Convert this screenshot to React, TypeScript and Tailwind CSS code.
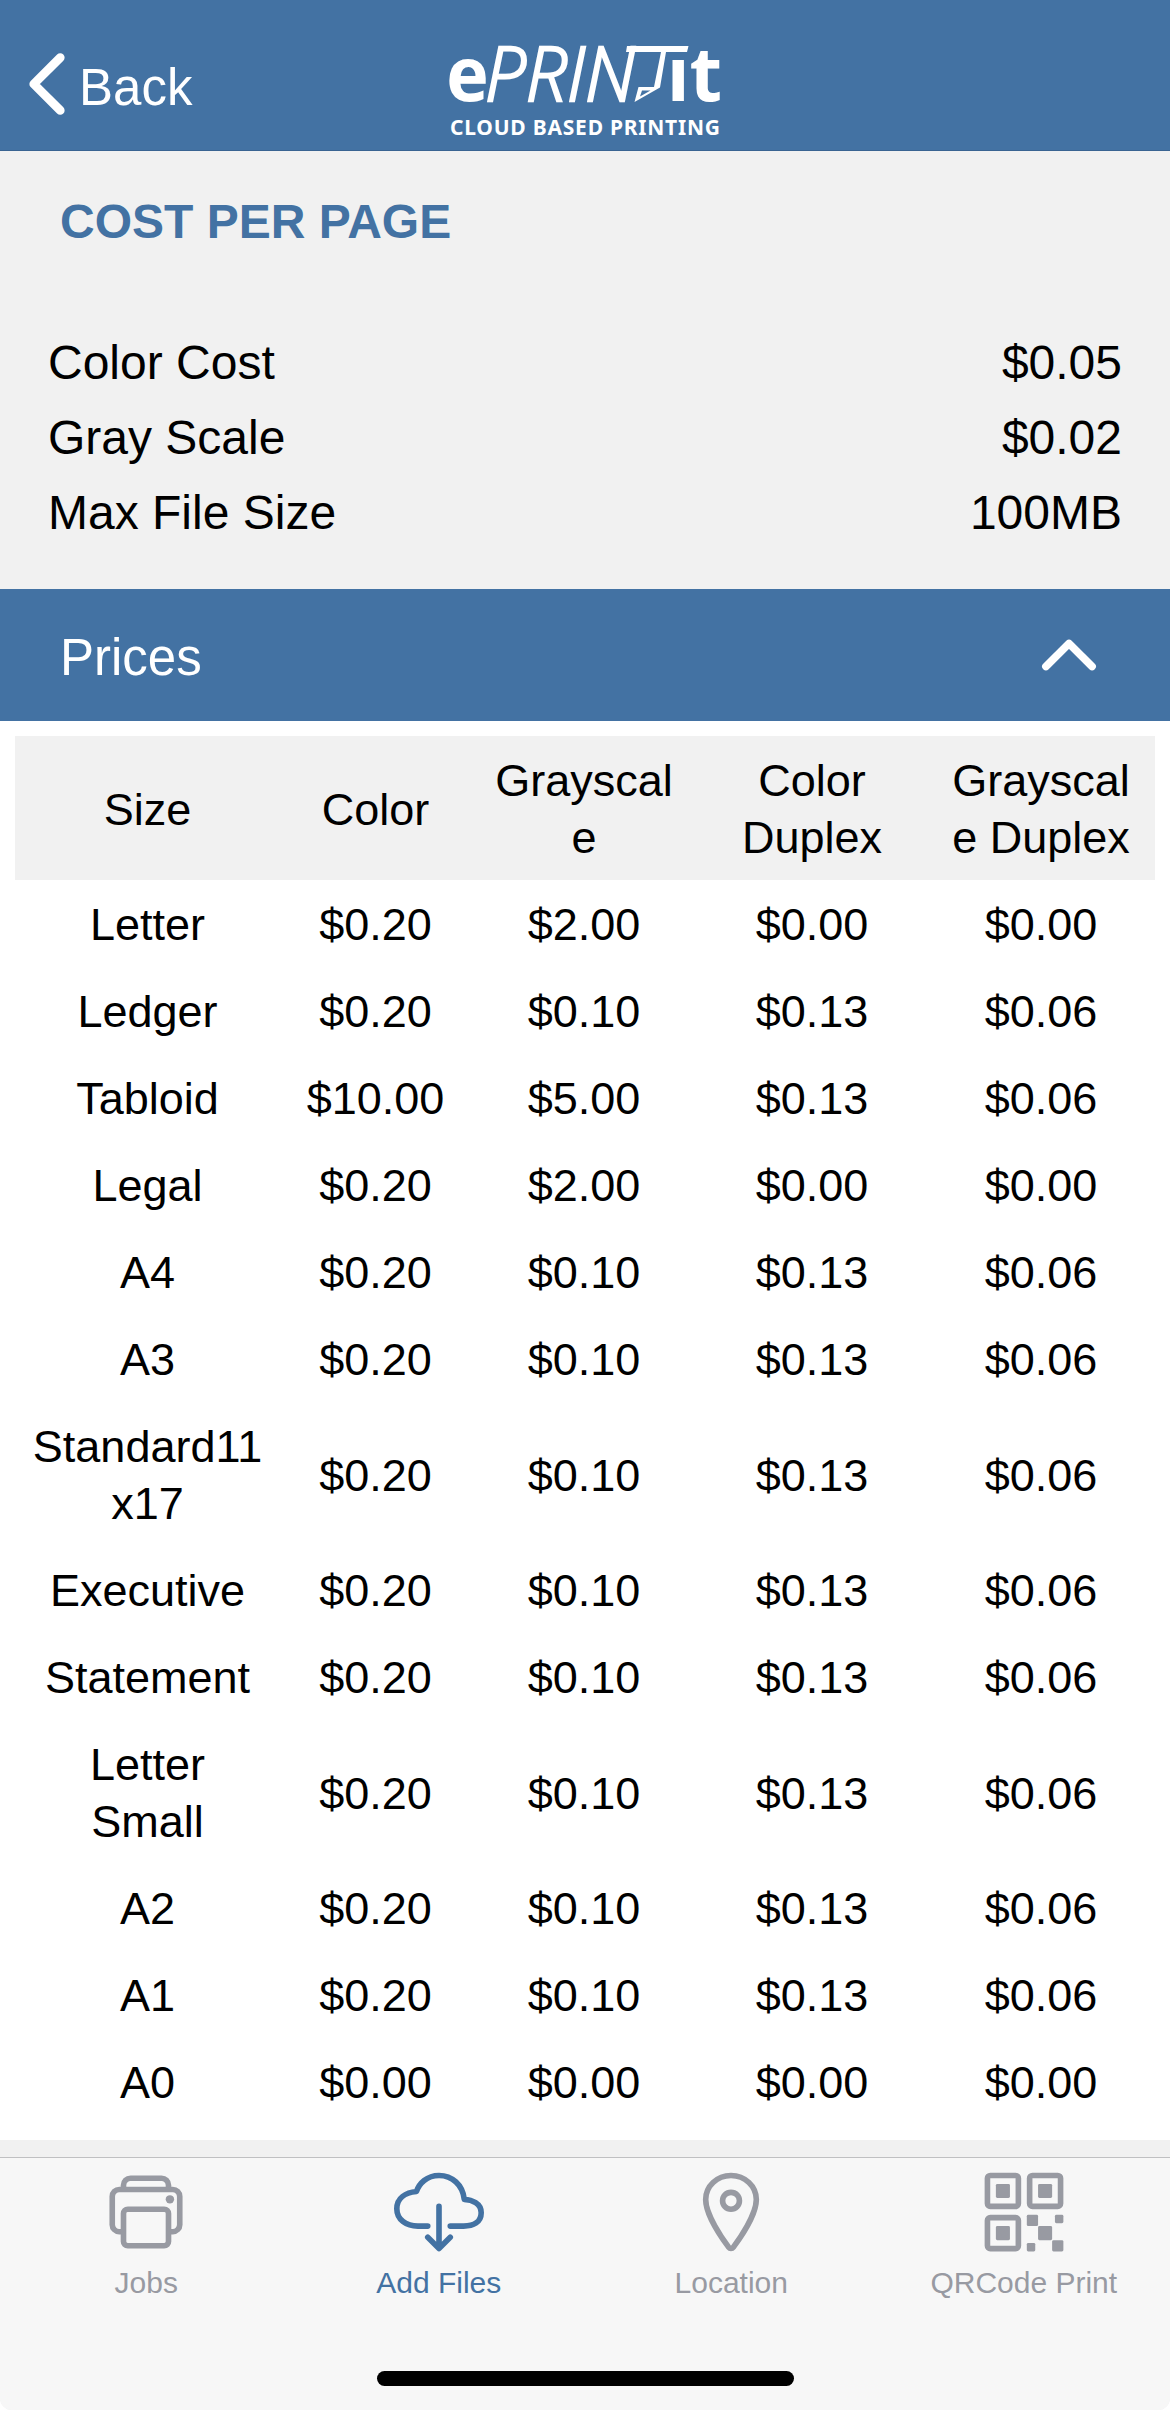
import {
  IoChevronBack,
  IoChevronUp,
  IoCloudDownloadOutline,
  IoLocationOutline,
  IoPrintOutline,
  IoQrCodeOutline,
} from "react-icons/io5";

const costs = [
  { label: "Color Cost", value: "$0.05" },
  { label: "Gray Scale", value: "$0.02" },
  { label: "Max File Size", value: "100MB" },
];

const headers = ["Size", "Color", "Grayscale", "Color Duplex", "Grayscale Duplex"];

const prices = [
  ["Letter", "$0.20", "$2.00", "$0.00", "$0.00"],
  ["Ledger", "$0.20", "$0.10", "$0.13", "$0.06"],
  ["Tabloid", "$10.00", "$5.00", "$0.13", "$0.06"],
  ["Legal", "$0.20", "$2.00", "$0.00", "$0.00"],
  ["A4", "$0.20", "$0.10", "$0.13", "$0.06"],
  ["A3", "$0.20", "$0.10", "$0.13", "$0.06"],
  ["Standard11x17", "$0.20", "$0.10", "$0.13", "$0.06"],
  ["Executive", "$0.20", "$0.10", "$0.13", "$0.06"],
  ["Statement", "$0.20", "$0.10", "$0.13", "$0.06"],
  ["Letter Small", "$0.20", "$0.10", "$0.13", "$0.06"],
  ["A2", "$0.20", "$0.10", "$0.13", "$0.06"],
  ["A1", "$0.20", "$0.10", "$0.13", "$0.06"],
  ["A0", "$0.00", "$0.00", "$0.00", "$0.00"],
];

const tabs = [
  { label: "Jobs", icon: IoPrintOutline, active: false },
  { label: "Add Files", icon: IoCloudDownloadOutline, active: true },
  { label: "Location", icon: IoLocationOutline, active: false },
  { label: "QRCode Print", icon: IoQrCodeOutline, active: false },
];

function Logo() {
  return (
    <svg className="overflow-visible" width="310" height="120" viewBox="0 0 310 120" fill="#fff">
      <g fontFamily="'Noto Sans', sans-serif">
        <text x="16" y="71" fontSize="76" fontWeight="700" textLength="43" lengthAdjust="spacingAndGlyphs">
          e
        </text>
        <text
          x="55"
          y="71"
          fontSize="75"
          fontWeight="300"
          fontStyle="italic"
          fontFamily="'Open Sans', sans-serif"
          stroke="#fff"
          strokeWidth="2.4"
          textLength="150"
          lengthAdjust="spacingAndGlyphs"
        >
          PRIN
        </text>
        <text x="237" y="71" fontSize="76" fontWeight="700" textLength="55" lengthAdjust="spacingAndGlyphs">
          ıt
        </text>
        <text x="20" y="105" fontSize="21" fontWeight="700" textLength="270" lengthAdjust="spacing">
          CLOUD BASED PRINTING
        </text>
      </g>
      {/* T with the folded page corner */}
      <path d="M197 16H258.500L257 22H236L230 57.500L204.500 72L208.500 57H224L231 22H196Z" />
      <path d="M212 60.500H220.500L210 66.500Z" fill="#4372a3" />
    </svg>
  );
}

function Header() {
  return (
    <header className="flex h-[151px] border-b border-[#3a6492] bg-[#4372a3] text-white">
      <div className="flex w-[430px] items-center pt-[18px]">
        <IoChevronBack className="h-[94px] w-[94px]" />
        <span className="-ml-[15px] pt-2 text-[51px]">Back</span>
      </div>
      <div className="pt-[30px]">
        <Logo />
      </div>
    </header>
  );
}

function PriceTable() {
  return (
    <div className="bg-white p-[15px]">
      <table className="w-full table-fixed text-center text-[45px] leading-[57px] wrap-break-word">
        <colgroup>
          <col className="w-[265px]" />
          <col className="w-[191px]" />
          <col className="w-[226px]" />
          <col className="w-[230px]" />
          <col className="w-[228px]" />
        </colgroup>
        <thead className="bg-[#f1f1f1]">
          <tr>
            {headers.map((header) => (
              <th key={header} className="px-[15px] pt-4 pb-[14px] font-normal">
                {header}
              </th>
            ))}
          </tr>
        </thead>
        <tbody>
          {prices.map((row) => (
            <tr key={row[0]}>
              {row.map((cell, i) => (
                <td key={i} className="px-[15px] pt-4 pb-[14px]">
                  {cell}
                </td>
              ))}
            </tr>
          ))}
        </tbody>
      </table>
    </div>
  );
}

function TabBar() {
  return (
    <nav className="h-[253px] border-t border-[#c0c0c2] bg-[#f7f7f7]">
      <div className="grid h-[213px] grid-cols-4">
        {tabs.map(({ label, icon: Icon, active }) => (
          <div
            key={label}
            className={`flex flex-col items-center pt-[9px] ${active ? "text-[#4372a3]" : "text-[#989aa2]"}`}
          >
            <Icon className="h-[90px] w-[90px]" />
            <span className="mt-2 text-[30px] leading-[36px]">{label}</span>
          </div>
        ))}
      </div>
      <div className="mx-auto h-[15px] w-[417px] rounded-full bg-black" />
    </nav>
  );
}

export default function App() {
  return (
    <div className="flex h-[2410px] w-[1170px] flex-col overflow-hidden rounded-b-[12px] bg-[#f1f1f1] font-['Liberation_Sans',Arial,sans-serif] text-black">
      <Header />
      <h1 className="mt-[41px] pl-[60px] text-[48px] leading-[60px] font-bold text-[#4372a3]">
        COST PER PAGE
      </h1>
      <div className="mt-[73px] flex flex-col px-[48px]">
        {costs.map((cost) => (
          <div key={cost.label} className="flex h-[75px] items-center justify-between text-[48px]">
            <span>{cost.label}</span>
            <span>{cost.value}</span>
          </div>
        ))}
      </div>
      <div className="mt-[39px] flex h-[132px] items-center justify-between bg-[#4372a3] px-[60px] text-white">
        <span className="pt-1.5 text-[51px]">Prices</span>
        <IoChevronUp className="h-[82px] w-[82px]" />
      </div>
      <PriceTable />
      <div className="mt-auto">
        <TabBar />
      </div>
    </div>
  );
}
